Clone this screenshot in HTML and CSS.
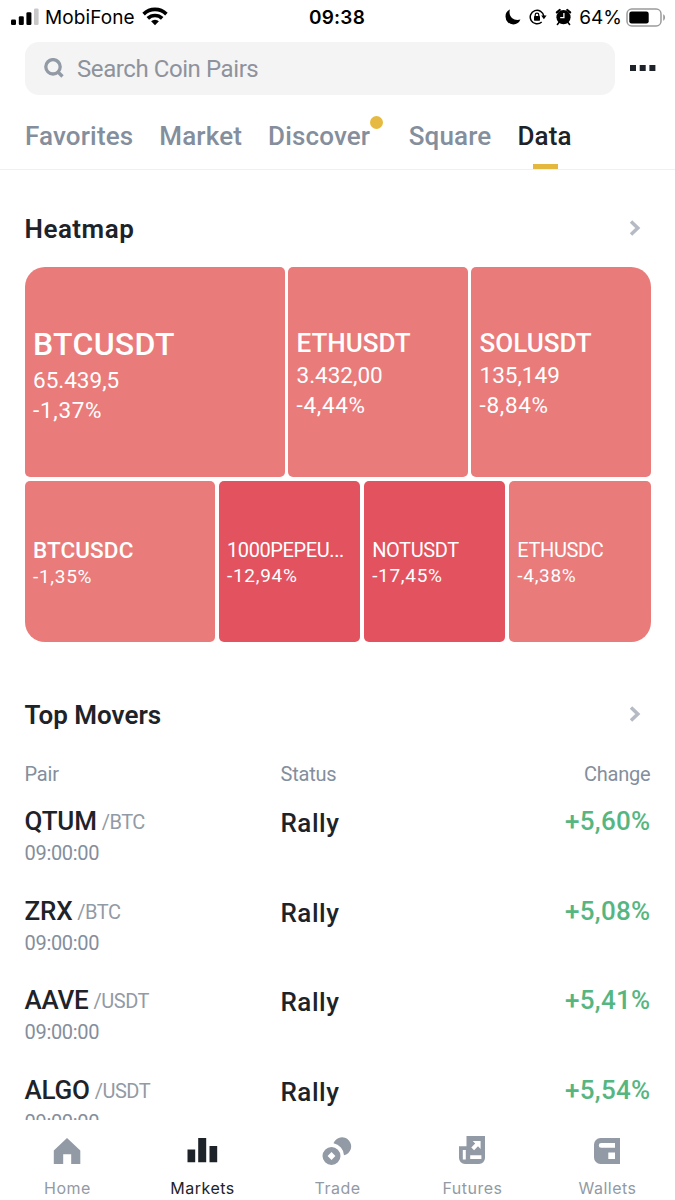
FILE: index.html
```html
<!DOCTYPE html>
<html lang="en">
<head>
  <meta charset="UTF-8" />
  <meta name="viewport" content="width=device-width, initial-scale=1" />
  <title>Markets - Data</title>
  <link rel="stylesheet" href="styles.css">
</head>
<body>

  <div class="status-bar">
    <div class="status-left">
      <svg width="28" height="18" viewBox="0 0 28 18">
        <rect x="0" y="11.5" width="5" height="5.5" rx="1.3" />
        <rect x="7.8" y="8.3" width="5" height="8.7" rx="1.3" />
        <rect x="15.4" y="4.3" width="5" height="12.7" rx="1.3" />
        <rect x="23" y="0.5" width="4.6" height="16.5" rx="1.3" fill="#c8c8c8" />
      </svg>
      <span class="carrier">MobiFone</span>
      <svg class="wifi" width="26" height="19" viewBox="0 0 26 19">
        <g fill="none" stroke="#000" stroke-width="3.6">
          <path d="M1.6 7.1a16.2 16.2 0 0 1 22.8 0" />
          <path d="M5.8 11.4a10.3 10.3 0 0 1 14.4 0" />
        </g>
        <path d="M13 18.3l-3.9-4a5.6 5.6 0 0 1 7.8 0z" />
      </svg>
    </div>
    <div class="clock">09:38</div>
    <div class="status-right">
      <svg width="16" height="16" viewBox="0 0 16 16">
        <path d="M4.9.6A7.6 7.6 0 0 0 .5 7.6a7.8 7.8 0 0 0 7.9 7.800 7.500 7.500 0 0 0 7-4.800C9.600 12.600 2.800 8.200 4.900.6z" />
      </svg>
      <svg class="lock" width="18" height="18" viewBox="0 0 18 18">
        <path d="M12.7 14A6.8 6.8 0 1 1 14.8 8.2" fill="none" stroke="#000" stroke-width="1.5" />
        <path d="M12.2 7.6h5.4l-2.7 3.7z" />
        <rect x="5" y="8" width="6" height="4.7" rx=".7" />
        <path d="M6.2 8.5V6.9a1.8 1.8 0 0 1 3.6 0v1.6" fill="none" stroke="#000" stroke-width="1.2" />
      </svg>
      <svg class="alarm" width="17" height="18" viewBox="0 0 17 18">
        <circle cx="8.5" cy="9.2" r="7.1" />
        <path d="M1.9 4.4L4.7 2M15.1 4.4L12.3 2" stroke="#000" stroke-width="2.3" stroke-linecap="round" />
        <path d="M4.2 14.2l-1.8 2.2M12.8 14.2l1.8 2.2" stroke="#000" stroke-width="1.6" stroke-linecap="round" />
        <path d="M8.9 4.9v4.7H5.2" fill="none" stroke="#fff" stroke-width="1.3" />
      </svg>
      <span class="percent">64%</span>
      <svg class="battery" width="40" height="19" viewBox="0 0 40 19">
        <rect x="1" y="1" width="34" height="17" rx="4.8" fill="none" stroke="#9b9b9b" stroke-width="1.5" />
        <rect x="3.3" y="3.5" width="19.4" height="12" rx="2.3" />
        <path d="M37.2 6.3c2.5 1 2.5 5.4 0 6.4z" fill="#9b9b9b" />
      </svg>
    </div>
  </div>

  <div class="search-row">
    <div class="search-box">
      <svg width="20" height="20" viewBox="0 0 20 20" fill="none" stroke="#929aa5" stroke-width="3.3">
        <circle cx="9" cy="8.8" r="7.2" />
        <path d="M13.500 13.500l5 5" />
      </svg>
      <span>Search Coin Pairs</span>
    </div>
    <svg class="more" width="26" height="6" viewBox="0 0 26 6" fill="#1e2329">
      <rect width="6" height="6" />
      <rect x="9.7" width="6" height="6" />
      <rect x="19.4" width="6" height="6" />
    </svg>
  </div>

  <div class="tabs">
    <div class="tab">Favorites</div>
    <div class="tab">Market</div>
    <div class="tab discover">Discover<i class="dot"></i></div>
    <div class="tab">Square</div>
    <div class="tab active">Data</div>
  </div>

  <div class="content">
    <div class="section-title">
      <h2 class="spaced">Heatmap</h2>
      <svg class="arrow" width="12" height="16" viewBox="0 0 12 16"><path d="M2 1.5L8.8 8 2 14.5" /></svg>
    </div>

    <div class="heatmap">
      <div class="heat-row top-row">
        <div class="tile big">
          <b>BTCUSDT</b>
          <span class="price">65.439,5</span>
          <span>-1,37%</span>
        </div>
        <div class="tile medium">
          <b>ETHUSDT</b>
          <span class="price">3.432,00</span>
          <span>-4,44%</span>
        </div>
        <div class="tile medium">
          <b>SOLUSDT</b>
          <span class="price">135,149</span>
          <span>-8,84%</span>
        </div>
      </div>
      <div class="heat-row bottom-row">
        <div class="tile small strong">
          <b>BTCUSDC</b>
          <span>-1,35%</span>
        </div>
        <div class="tile small dark">
          <b>1000PEPEU...</b>
          <span>-12,94%</span>
        </div>
        <div class="tile small dark">
          <b>NOTUSDT</b>
          <span>-17,45%</span>
        </div>
        <div class="tile small">
          <b>ETHUSDC</b>
          <span>-4,38%</span>
        </div>
      </div>
    </div>

    <div class="section-title movers-title">
      <h2>Top Movers</h2>
      <svg class="arrow" width="12" height="16" viewBox="0 0 12 16"><path d="M2 1.5L8.8 8 2 14.5" /></svg>
    </div>

    <div class="movers">
      <div class="movers-head">
        <span>Pair</span>
        <span>Status</span>
        <span class="right">Change</span>
      </div>
      <div class="mover">
        <div>
          <div class="pair"><b>QTUM</b> <span>/BTC</span></div>
          <div class="time">09:00:00</div>
        </div>
        <div class="status">Rally</div>
        <div class="change">+5,60%</div>
      </div>
      <div class="mover">
        <div>
          <div class="pair"><b>ZRX</b> <span>/BTC</span></div>
          <div class="time">09:00:00</div>
        </div>
        <div class="status">Rally</div>
        <div class="change">+5,08%</div>
      </div>
      <div class="mover">
        <div>
          <div class="pair"><b>AAVE</b> <span>/USDT</span></div>
          <div class="time">09:00:00</div>
        </div>
        <div class="status">Rally</div>
        <div class="change">+5,41%</div>
      </div>
      <div class="mover">
        <div>
          <div class="pair"><b>ALGO</b> <span>/USDT</span></div>
          <div class="time">09:00:00</div>
        </div>
        <div class="status">Rally</div>
        <div class="change">+5,54%</div>
      </div>
    </div>
  </div>

  <nav class="bottom-nav">
    <div class="nav-item">
      <svg width="32" height="32" viewBox="0 0 32 32">
        <path d="M16 3L29.3 15.5V29H20.2V19.3H12.2V29H2.8V15.5z" />
      </svg>
      <span>Home</span>
    </div>
    <div class="nav-item active">
      <svg width="32" height="32" viewBox="0 0 32 32">
        <path d="M1.5 14.5h7.700v12.800H1.500zM12.200 3h8v24.300h-8zM23.500 11h7.700v16.300h-7.700z" />
      </svg>
      <span>Markets</span>
    </div>
    <div class="nav-item">
      <svg width="32" height="32" viewBox="0 0 32 32">
        <path d="M12.5 8.3A9.1 9.1 0 1 1 23 20.3 12.600 12.600 0 0 0 12.500 8.300z" />
        <path fill-rule="evenodd" d="M10.500 12a9 9 0 1 0 0 18 9 9 0 0 0 0-18zm0 5.100l3.900 3.900-3.900 3.900L6.600 21z" />
      </svg>
      <span>Trade</span>
    </div>
    <div class="nav-item">
      <svg width="32" height="32" viewBox="0 0 32 32">
        <path fill-rule="evenodd" d="M10.5 1H29v22a6 6 0 0 1-6 6H9a6 6 0 0 1-6-6V11.200h7.500zM6.800 15v9.500h3V15zM14.200 20.300v3.700h11.200v-3.700zM16.700 6l2.500 2.500-3.900 3.900 2.800 2.800 3.900-3.900 2.600 2.600V6z" />
      </svg>
      <span>Futures</span>
    </div>
    <div class="nav-item">
      <svg width="32" height="32" viewBox="0 0 32 32">
        <path fill-rule="evenodd" d="M9.5 3H29v26H9.5A6.5 6.5 0 0 1 3 22.5V9.5A6.5 6.5 0 0 1 9.5 3zM10.2 8a2.4 2.4 0 0 0 0 4.8H24V8zM17.3 17.5V24H24v-6.5z" />
      </svg>
      <span>Wallets</span>
    </div>
  </nav>

</body>
</html>
```
FILE: styles.css
```css
* {
  box-sizing: border-box;
}
body {
  margin: 0;
  height: 1200px;
  display: flex;
  flex-direction: column;
  overflow: hidden;
  font-family: Roboto, "Noto Sans", sans-serif;
  background: #fff;
  color: #1e2329;
}
svg {
  display: block;
  flex: none;
}

/* status bar */
.status-bar {
  height: 34px;
  flex: none;
  display: grid;
  grid-template-columns: 1fr auto 1fr;
  align-items: center;
  padding: 0 9px 0 11px;
  font-family: Inter, sans-serif;
  font-size: 19px;
  color: #000;
}
.status-left, .status-right {
  display: flex;
  align-items: center;
}
.status-right {
  justify-content: flex-end;
}
.carrier {
  margin-left: 6px;
  letter-spacing: 0.1px;
}
.wifi {
  margin: -2px 0 0 7px;
}
.clock {
  margin-right: 3px;
  font-weight: 600;
  letter-spacing: 0.2px;
}
.lock {
  margin-left: 8px;
}
.alarm {
  margin-left: 8.5px;
}
.percent {
  margin-left: 7px;
}
.battery {
  margin-left: 4px;
}

/* search */
.search-row {
  display: flex;
  align-items: center;
  flex: none;
  padding: 8px 19px 0 24.5px;
}
.search-box {
  flex: 1;
  height: 52.5px;
  display: flex;
  align-items: center;
  padding-left: 19.5px;
  border-radius: 14px;
  background: #f4f4f4;
  color: #8e929c;
  font-size: 24px;
}
.search-box span {
  margin-left: 13px;
  padding-top: 2px;
  letter-spacing: -0.42px;
}
.more {
  margin-left: 15.5px;
}

/* tabs */
.tabs {
  flex: none;
  display: flex;
  gap: 26px;
  height: 75px;
  padding-left: 25px;
  border-bottom: 1px solid #f0f0f0;
  font-size: 26px;
  font-weight: 500;
  line-height: 82px;
  letter-spacing: 0.15px;
  color: #848e9c;
}
.tab {
  position: relative;
}
.discover {
  margin-right: 12.5px;
}
.tab.active {
  color: #1e2329;
}
.tab.active::after {
  content: "";
  position: absolute;
  left: 50%;
  bottom: 0;
  width: 25px;
  height: 5px;
  margin-left: -12px;
  background: #e4b83f;
}
.dot {
  position: absolute;
  right: -13px;
  top: 21px;
  width: 13px;
  height: 13px;
  border-radius: 50%;
  background: #e6ba42;
}

.content {
  flex: 1;
  min-height: 0;
  overflow: hidden;
  padding: 0 24.5px;
}
.section-title {
  display: flex;
  justify-content: space-between;
  align-items: center;
  height: 40px;
  margin-top: 38.5px;
  padding-right: 10px;
}
.section-title h2 {
  margin: 0;
  font-size: 26px;
  font-weight: 600;
}
.section-title .spaced {
  padding-top: 1px;
  letter-spacing: 0.5px;
}
.arrow path {
  fill: none;
  stroke: #b5bac4;
  stroke-width: 3.5;
}

/* heatmap */
.heatmap {
  display: flex;
  flex-direction: column;
  gap: 3.5px;
  margin-top: 19px;
  border-radius: 20px;
  overflow: hidden;
}
.heat-row {
  display: grid;
  gap: 3.5px;
}
.top-row {
  grid-template-columns: 260px 1fr 1fr;
  height: 210px;
}
.bottom-row {
  grid-template-columns: 190.5px 1fr 1fr 1fr;
  height: 161px;
}
.tile {
  display: flex;
  flex-direction: column;
  justify-content: center;
  padding: 4px 0 0 8.5px;
  border-radius: 5px;
  background: #e97b7b;
  color: #fff;
  white-space: nowrap;
}
.tile b {
  font-weight: 500;
}
.tile span {
  letter-spacing: 0.7px;
}
.tile .price {
  letter-spacing: 0;
}
.big {
  padding-top: 4px;
}
.big b {
  font-size: 32px;
  line-height: 42px;
  letter-spacing: 0.3px;
}
.big span {
  font-size: 22.5px;
  line-height: 30px;
}
.medium {
  padding-top: 1px;
}
.medium b {
  font-size: 26px;
  line-height: 34px;
}
.medium span {
  font-size: 22.5px;
  line-height: 30px;
}
.small b {
  font-size: 20px;
  font-weight: 400;
  line-height: 26px;
  letter-spacing: -0.4px;
}
.small span {
  font-size: 19px;
  line-height: 26px;
}
.small.strong b {
  font-size: 22.5px;
  font-weight: 500;
  line-height: 28px;
  letter-spacing: 0.1px;
}
.dark {
  background: #e2535f;
}

/* top movers */
.movers-title {
  margin-top: 53px;
}
.movers-title .arrow {
  margin-top: -1px;
}
.movers-head, .mover {
  display: grid;
  grid-template-columns: 256px 1fr 1fr;
}
.movers-head {
  margin-top: 26px;
  font-size: 20px;
  line-height: 26px;
  letter-spacing: -0.2px;
  color: #848e9c;
}
.right {
  text-align: right;
}
.mover {
  height: 89.67px;
  padding-top: 17.4px;
}
.pair {
  font-size: 20px;
  line-height: 34px;
  color: #929aa5;
}
.pair b {
  font-size: 26px;
  font-weight: 500;
  letter-spacing: -0.2px;
  color: #1e2329;
}
.pair span {
  position: relative;
  top: -1px;
  letter-spacing: -0.5px;
}
.time {
  font-size: 20px;
  line-height: 27px;
  letter-spacing: -0.3px;
  color: #848e9c;
}
.status {
  font-size: 26px;
  font-weight: 500;
  line-height: 38px;
  letter-spacing: 0.5px;
}
.change {
  font-size: 26px;
  font-weight: 500;
  line-height: 34px;
  letter-spacing: 0.3px;
  text-align: right;
  color: #56b681;
}

/* bottom nav */
.bottom-nav {
  flex: none;
  display: grid;
  grid-template-columns: repeat(5, 1fr);
  height: 80px;
  padding-top: 15px;
  background: #fff;
  font-family: Inter, sans-serif;
}
.nav-item {
  display: flex;
  flex-direction: column;
  align-items: center;
  font-size: 16px;
  line-height: 20px;
  color: #929aa5;
}
.nav-item svg {
  margin-right: 1px;
  fill: #929aa5;
}
.nav-item span {
  margin-top: 10.5px;
  letter-spacing: 0.5px;
}
.nav-item.active {
  color: #1e2329;
}
.nav-item.active svg {
  fill: #1e2329;
}
```
